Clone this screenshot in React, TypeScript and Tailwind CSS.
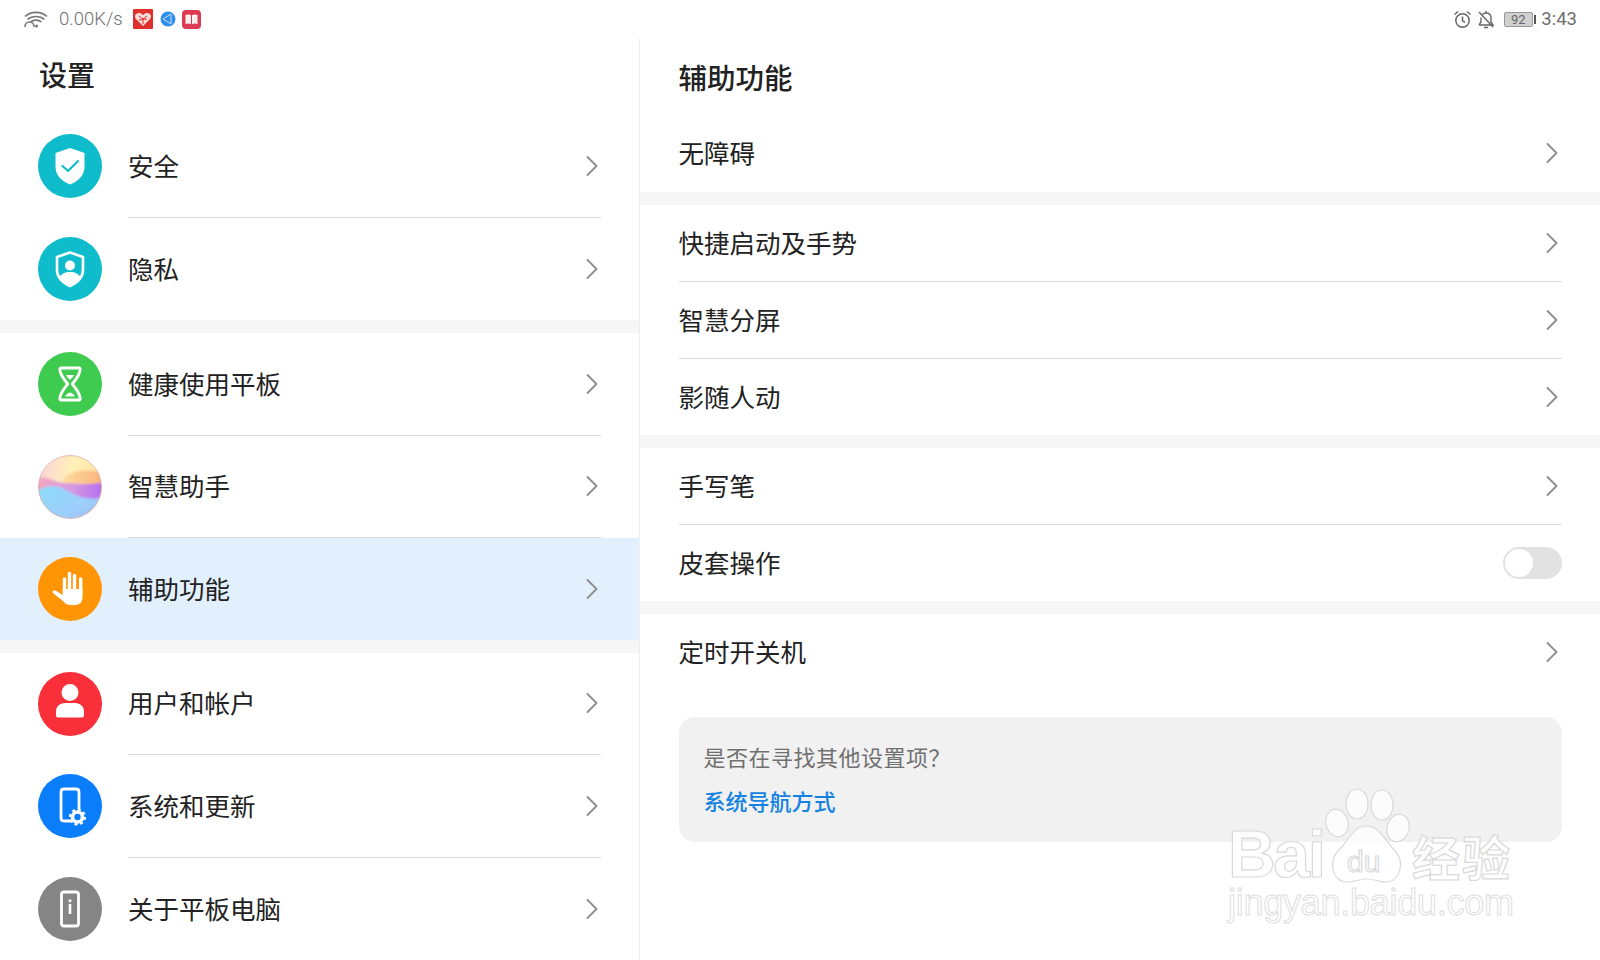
import type { ReactNode } from "react"

const cjk = "font-['Noto_Sans_CJK_SC','Noto_Sans',sans-serif]"

function Chevron() {
  return (
    <svg width="14" height="24" viewBox="0 0 14 24" fill="none" className="shrink-0">
      <path d="M2.5 3l9 9-9 9" stroke="#8f8f8f" strokeWidth="1.9" strokeLinecap="round" strokeLinejoin="round" />
    </svg>
  )
}

function Circle({ color, children }: { color: string; children: ReactNode }) {
  return (
    <svg width="64" height="64" viewBox="0 0 64 64" className="shrink-0">
      <circle cx="32" cy="32" r="32" fill={color} />
      {children}
    </svg>
  )
}

const shieldPath = "M32 14l14.5 5v14c0 9-7 14.500-14.500 17.500C24.500 47.500 17.500 42 17.500 33V19z"

const SafeIcon = () => (
  <Circle color="#0fbccb">
    <path d={shieldPath} fill="#fff" />
    <path d="M24.500 32l5.500 5 10-10" fill="none" stroke="#0fbccb" strokeWidth="2.200" strokeLinecap="round" strokeLinejoin="round" />
  </Circle>
)

const PrivacyIcon = () => (
  <Circle color="#0fbccb">
    <path d="M32 15.500l13 4.500v13c0 8-6.500 13-13 16-6.500-3-13-8-13-16V20z" fill="none" stroke="#fff" strokeWidth="2.600" strokeLinejoin="round" />
    <circle cx="32" cy="28.500" r="5" fill="#fff" />
    <path d="M21 40.500c2-3.500 6-5.500 11-5.500s9 2 11 5.500c-2.500 4-6.500 6.800-11 9-4.500-2.200-8.500-5-11-9z" fill="#fff" />
  </Circle>
)

const HourglassIcon = () => (
  <Circle color="#3fcb50">
    <path
      d="M23 16h18c.8 0 1.300.6 1.200 1.500-.6 6-4.500 10.500-8 14.500 3.500 4 7.400 8.500 8 14.500.1.900-.4 1.500-1.200 1.500H23c-.8 0-1.300-.6-1.200-1.500.6-6 4.500-10.500 8-14.500-3.500-4-7.400-8.500-8-14.500-.1-.9.4-1.500 1.200-1.500z"
      fill="none"
      stroke="#fff"
      strokeWidth="2.800"
      strokeLinejoin="round"
    />
    <path d="M28 23h8c-1 2-2.500 3.500-4 5-1.500-1.500-3-3-4-5zM27 44.500c1-2 3-3.500 5-4 2 .5 4 2 5 4z" fill="#fff" />
  </Circle>
)

const AssistantIcon = () => (
  <svg width="64" height="64" viewBox="0 0 64 64" className="shrink-0">
    <defs>
      <clipPath id="orb">
        <circle cx="32" cy="32" r="31.500" />
      </clipPath>
      <linearGradient id="orbTop" x1="0" y1="0" x2="1" y2="0.300">
        <stop offset="0" stopColor="#fbd0dc" />
        <stop offset="0.550" stopColor="#fff0b8" />
        <stop offset="1" stopColor="#fee3a0" />
      </linearGradient>
      <linearGradient id="orbMid" x1="0" y1="0" x2="1" y2="0">
        <stop offset="0" stopColor="#f4a8bc" />
        <stop offset="0.500" stopColor="#d89ce0" />
        <stop offset="1" stopColor="#b26cf0" />
      </linearGradient>
      <linearGradient id="orbLow" x1="0" y1="0" x2="1" y2="1">
        <stop offset="0" stopColor="#8edcfc" />
        <stop offset="0.600" stopColor="#9ccffb" />
        <stop offset="1" stopColor="#a9b6f5" />
      </linearGradient>
      <linearGradient id="orbWarm" x1="0" y1="0" x2="1" y2="0">
        <stop offset="0" stopColor="#fddca0" />
        <stop offset="1" stopColor="#fbb27a" />
      </linearGradient>
      <filter id="soft">
        <feGaussianBlur stdDeviation="1" />
      </filter>
    </defs>
    <g clipPath="url(#orb)">
      <rect width="64" height="64" fill="url(#orbTop)" />
      <g filter="url(#soft)">
        <path d="M24 26C32 14 50 14 66 18V36H40z" fill="url(#orbWarm)" />
        <path d="M-2 24C8 19 15 28 27 28S46 31 66 27V52H-2z" fill="url(#orbMid)" />
        <path d="M-2 36C8 30 18 30 26 34S44 47 66 42V66H-2z" fill="url(#orbLow)" />
      </g>
    </g>
    <circle cx="32" cy="32" r="31.500" fill="none" stroke="#d9a7a0" strokeOpacity="0.700" />
  </svg>
)

const HandIcon = () => (
  <Circle color="#ff9505">
    <g stroke="#fff" strokeWidth="3.400" strokeLinecap="round">
      <path d="M26.500 22v14M31.500 16.500v18M36.500 18.500v16M42.700 22v16" />
    </g>
    <path
      d="M24.800 32H44.400V41C44.400 45.500 41 48 37 48H33C29 48 27 46.500 25 44L15.500 36.500C13.500 35 15 33 17.500 33.500L24.800 38z"
      fill="#fff"
    />
  </Circle>
)

const UserIcon = () => (
  <Circle color="#f9303a">
    <circle cx="32" cy="20.500" r="8.500" fill="#fff" />
    <path d="M18 43.500v-4c0-5 4-8.500 9-8.500h10c5 0 9 3.500 9 8.500v4c0 1-.8 2-2 2H20c-1.200 0-2-1-2-2z" fill="#fff" />
  </Circle>
)

const SystemIcon = () => (
  <Circle color="#0a7dfa">
    <path d="M35 47h-9c-2 0-3-1-3-3V18c0-2 1-3 3-3h12c2 0 3 1 3 3v17" fill="none" stroke="#fff" strokeWidth="2.800" strokeLinecap="round" />
    <circle cx="39.500" cy="43" r="5" fill="none" stroke="#fff" strokeWidth="3.600" />
    <circle cx="39.500" cy="43" r="7.500" fill="none" stroke="#fff" strokeWidth="2.200" strokeDasharray="3 2.890" />
  </Circle>
)

const AboutIcon = () => (
  <Circle color="#858585">
    <rect x="23.500" y="15" width="17" height="34" rx="2.500" fill="none" stroke="#fff" strokeWidth="2.800" />
    <rect x="30.700" y="27" width="2.600" height="10" fill="#fff" />
    <rect x="30.700" y="22.500" width="2.600" height="2.600" fill="#fff" />
  </Circle>
)

function MenuRow({ icon, label, active, divider }: { icon: ReactNode; label: string; active?: boolean; divider?: boolean }) {
  return (
    <div className={`flex items-center gap-[26px] pl-[38px] ${active ? "h-[101.500px] bg-[#e2f0fd]" : "h-[102.500px]"}`}>
      {icon}
      <div className={`mr-[38px] flex h-full flex-1 items-center justify-between pr-[2px] ${divider ? "border-b border-[#dcdcdc]" : ""}`}>
        <span className="pb-[2px] text-[25.500px] text-[#222]">{label}</span>
        <Chevron />
      </div>
    </div>
  )
}

function SettingRow({ label, divider, children }: { label: string; divider?: boolean; children?: ReactNode }) {
  return (
    <div className={`flex h-[76.500px] items-center justify-between pr-[3px] ${divider ? "border-b border-[#dcdcdc]" : ""}`}>
      <span className="pb-[2px] text-[25.500px] text-[#222]">{label}</span>
      {children ?? <Chevron />}
    </div>
  )
}

function Band() {
  return <div className="h-[13px] bg-[#f6f6f6]" />
}

function StatusBar() {
  return (
    <div className="flex h-[38px] items-center justify-between pl-[24px] pr-[23px] text-[#707070]">
      <div className="flex items-center">
        <svg width="24" height="20" viewBox="0 0 24 20" fill="none" stroke="#777" strokeWidth="1.600">
          <path d="M1 7.500C7 2 17 2 23 7.500M3.500 10.500c4.500-4 12.500-4 17 0M6.500 13c3-2.500 8-2.500 11 0" />
          <path d="M1 18c0-3 2-5 4.500-5s4.500 2 4.500 5" />
          <circle cx="12.500" cy="17" r="1.500" fill="#777" stroke="none" />
        </svg>
        <span className="ml-[11px] font-['Roboto',sans-serif] text-[18.500px] font-light leading-none">0.00K/s</span>
        <svg width="20" height="20" viewBox="0 0 20 20" className="ml-[10px]">
          <rect width="20" height="20" rx="1" fill="#e0302c" />
          <path d="M10 17L3 10c-2.500-3 0-6.500 3.500-6 1.500.2 2.700 1 3.500 2.300C10.800 5 12 4.200 13.500 4 17 3.500 19.500 7 17 10z" fill="#fbdcd8" />
          <path d="M6 7l4 3 4-3M6 11l8-1M10 10v5" stroke="#e0302c" strokeWidth="1" fill="none" />
        </svg>
        <svg width="16" height="16" viewBox="0 0 16 16" className="ml-[7px]">
          <circle cx="8" cy="8" r="7.500" fill="#2f8fe8" />
          <path d="M3 8l8-5M3 8l8 5M11 3v10" stroke="#d5e9fb" strokeWidth="0.900" fill="none" />
        </svg>
        <svg width="19" height="19" viewBox="0 0 19 19" className="ml-[6px]">
          <rect width="19" height="19" rx="4" fill="#dd3b54" />
          <path d="M3.500 5c2-.8 4-.8 5.500.3v9c-1.500-1-3.500-1-5.500-.3zM15.500 5c-2-.8-4-.8-5.500.3v9c1.500-1 3.500-1 5.500-.3z" fill="#fdeef0" />
        </svg>
      </div>
      <div className="flex items-center">
        <svg width="19" height="19" viewBox="0 0 19 19" fill="none" stroke="#666" strokeWidth="1.500">
          <circle cx="9.500" cy="10.500" r="6.700" />
          <path d="M9.500 6.500v4.300l2.500 1.500M1.500 4.500L5 1.500M17.500 4.500L14 1.500" />
        </svg>
        <svg width="18" height="19" viewBox="0 0 18 19" fill="none" stroke="#666" strokeWidth="1.400" className="ml-[5px]">
          <path d="M2 15h14l-2-3V8c0-3-2-5-5-5-1.500 0-2.700.5-3.500 1.500M4 7.500V12l-2 3M7 17.500h4M9 1v2M2 2l14 15" />
        </svg>
        <div className="ml-[9px] flex items-center">
          <div className="flex h-[15px] w-[29px] items-center justify-center rounded-[2px] border border-[#999] bg-[#d0d0d0] font-['Roboto',sans-serif] text-[13px] leading-none text-[#666]">
            92
          </div>
          <div className="ml-[1.500px] h-[9px] w-[2px] bg-[#555]" />
        </div>
        <span className="ml-[5px] font-['Roboto',sans-serif] text-[18.500px] leading-none">3:43</span>
      </div>
    </div>
  )
}

function Watermark() {
  return (
    <svg width="360" height="180" viewBox="0 0 360 180" className="absolute left-[1180px] top-[760px]">
      <g fill="#fff" fillOpacity="0.750" stroke="#d9d9d9" strokeWidth="1.200">
        <text x="48" y="117" fontFamily="Liberation Sans" fontWeight="700" fontSize="66" textLength="98">Bai</text>
        <ellipse cx="157" cy="63" rx="11" ry="14" transform="rotate(-15 157 63)" />
        <ellipse cx="177" cy="44" rx="11" ry="15" />
        <ellipse cx="202" cy="45" rx="11" ry="15" />
        <ellipse cx="218" cy="68" rx="11" ry="14" transform="rotate(15 218 68)" />
        <path d="M186 66c14 0 20 16 30 26 9 9 4 30-10 30-7 0-12-3-19-3s-13 3-20 3c-15 0-19-21-9-31 10-9 15-25 28-25z" />
        <text x="167" y="112" fontFamily="Liberation Sans" fontSize="30">du</text>
        <text x="232" y="116" fontFamily="Noto Sans CJK SC" fontWeight="700" fontSize="48" textLength="98">经验</text>
      </g>
      <text x="48" y="155" fontFamily="Liberation Sans" fontSize="36" textLength="286" fill="#fff" fillOpacity="0.750" stroke="#dedede" strokeWidth="1">
        jingyan.baidu.com
      </text>
    </svg>
  )
}

export default function App() {
  return (
    <div className={`relative h-[960px] w-[1600px] overflow-hidden bg-white ${cjk}`}>
      <StatusBar />
      <div className="flex h-[922px]">
        {/* Left menu */}
        <div className="w-[640px] shrink-0 border-r border-[#eeeeee]">
          <div className="flex h-[77px] items-center pb-[6px] pl-[39px] text-[28px] font-medium text-[#222]">设置</div>
          <MenuRow icon={<SafeIcon />} label="安全" divider />
          <MenuRow icon={<PrivacyIcon />} label="隐私" />
          <Band />
          <MenuRow icon={<HourglassIcon />} label="健康使用平板" divider />
          <MenuRow icon={<AssistantIcon />} label="智慧助手" divider />
          <MenuRow icon={<HandIcon />} label="辅助功能" active />
          <Band />
          <MenuRow icon={<UserIcon />} label="用户和帐户" divider />
          <MenuRow icon={<SystemIcon />} label="系统和更新" divider />
          <MenuRow icon={<AboutIcon />} label="关于平板电脑" />
        </div>

        {/* Right detail */}
        <div className="flex-1">
          <div className="flex h-[77px] items-center pl-[38.500px] pt-[2px] text-[28.500px] font-medium text-[#222]">辅助功能</div>
          <div className="pl-[38.500px] pr-[38px]">
            <SettingRow label="无障碍" />
          </div>
          <Band />
          <div className="pl-[38.500px] pr-[38px] pt-[1px]">
            <SettingRow label="快捷启动及手势" divider />
            <SettingRow label="智慧分屏" divider />
            <SettingRow label="影随人动" />
          </div>
          <Band />
          <div className="pl-[38.500px] pr-[38px]">
            <SettingRow label="手写笔" divider />
            <SettingRow label="皮套操作">
              <div className="-mr-[3px] flex h-[32px] w-[59px] items-center rounded-full bg-[#e2e2e2] pl-[2px]">
                <div className="h-[28px] w-[28px] rounded-full bg-white" />
              </div>
            </SettingRow>
          </div>
          <Band />
          <div className="pl-[38.500px] pr-[38px]">
            <SettingRow label="定时开关机" />
            <div className="mt-[26px] flex h-[125px] flex-col justify-center gap-[14px] rounded-[16px] bg-[#f1f1f1] px-[25px] pb-[2px]">
              <div className="text-[22px] leading-[30px] tracking-[0.500px] text-[#707070]">是否在寻找其他设置项？</div>
              <div className="text-[22px] font-medium leading-[30px] text-[#1482e0]">系统导航方式</div>
            </div>
          </div>
        </div>
      </div>
      <Watermark />
    </div>
  )
}
